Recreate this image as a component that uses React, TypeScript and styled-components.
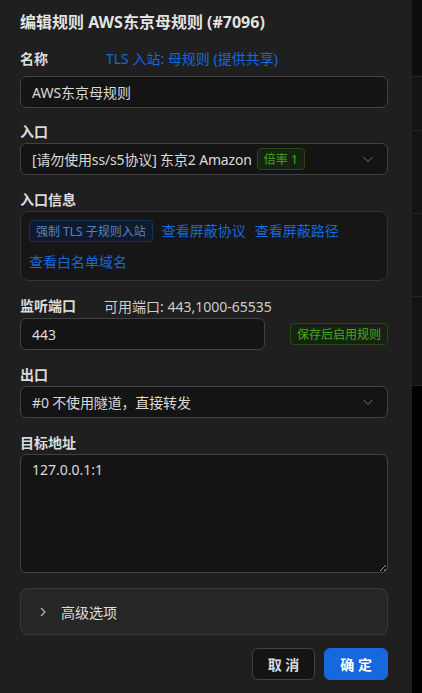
import React from "react";
import styled, { createGlobalStyle } from "styled-components";

const Global = createGlobalStyle`
  html, body { margin: 0; padding: 0; background: #000; }
  body { font-family: "Noto Sans", "Noto Sans CJK SC", sans-serif; }
  * { box-sizing: border-box; }
`;

const Page = styled.div`
  display: flex;
  width: 422px;
  height: 693px;
  overflow: hidden;
`;

const Panel = styled.div`
  width: 412px;
  flex: none;
  background: #1f1f1f;
  padding: 10px 24px 0 20px;
  display: flex;
  flex-direction: column;
  color: rgba(255, 255, 255, 0.85);
  font-size: 14px;
`;

const Title = styled.div`
  font-size: 16px;
  font-weight: 700;
  line-height: 24px;
  color: rgba(255, 255, 255, 0.88);
`;

const Item = styled.div<{ $top?: number }>`
  display: flex;
  flex-direction: column;
  margin-top: ${(p) => p.$top ?? 14}px;
`;

const LabelRow = styled.div<{ $gap?: number; $below?: number }>`
  display: flex;
  align-items: center;
  height: 22px;
  gap: ${(p) => p.$gap ?? 0}px;
  margin-bottom: ${(p) => p.$below ?? 0}px;
`;

const Label = styled.span`
  font-weight: 700;
  font-size: 14px;
  line-height: 22px;
  color: rgba(255, 255, 255, 0.85);
`;

const HintText = styled.span`
  font-size: 14px;
  color: rgba(255, 255, 255, 0.78);
`;

const LinkText = styled.span`
  font-size: 14px;
  color: #1668dc;
  line-height: 22px;
  cursor: pointer;
  white-space: nowrap;
`;

const TextInput = styled.input`
  height: 32px;
  width: 100%;
  background: #141414;
  border: 1px solid #424242;
  border-radius: 6px;
  padding: 4px 11px;
  color: rgba(255, 255, 255, 0.85);
  font-family: inherit;
  font-size: 14px;
  outline: none;
`;

const SelectBox = styled.div`
  height: 32px;
  width: 100%;
  background: #141414;
  border: 1px solid #424242;
  border-radius: 6px;
  padding: 0 11px;
  display: flex;
  align-items: center;
  gap: 6px;
  color: rgba(255, 255, 255, 0.85);
  font-size: 14px;
`;

const SelectValue = styled.span`
  flex: 1;
  display: flex;
  align-items: center;
  gap: 5px;
  white-space: nowrap;
  overflow: hidden;
  letter-spacing: -0.15px;
`;

const Chevron = styled.svg`
  width: 12px;
  height: 12px;
  flex: none;
  color: rgba(255, 255, 255, 0.25);
  margin-right: 2px;
`;

const Tag = styled.span<{ $tone: "green" | "blue" }>`
  display: inline-flex;
  align-items: center;
  height: 22px;
  padding: 0 6px;
  font-size: 12px;
  letter-spacing: 0;
  border-radius: 4px;
  white-space: nowrap;
  border: 1px solid ${(p) => (p.$tone === "green" ? "#274916" : "#15325b")};
  background: ${(p) => (p.$tone === "green" ? "#162312" : "#111a2c")};
  color: ${(p) => (p.$tone === "green" ? "#49aa19" : "#4f86c9")};
`;

const InfoBox = styled.div`
  border: 1px solid #333333;
  background: #161616;
  border-radius: 8px;
  padding: 8px 8px 7px 8px;
  display: flex;
  flex-wrap: wrap;
  align-items: center;
  column-gap: 9px;
  row-gap: 9px;
  height: 70px;
`;

const PortRow = styled.div`
  display: flex;
  align-items: center;
  justify-content: space-between;
  gap: 22px;
`;

const PortInput = styled(TextInput)`
  width: 245px;
  flex: none;
`;

const TextArea = styled.textarea`
  width: 100%;
  height: 119px;
  background: #141414;
  border: 1px solid #424242;
  border-radius: 6px;
  padding: 4px 11px;
  color: rgba(255, 255, 255, 0.85);
  font-family: inherit;
  font-size: 14px;
  line-height: 22px;
  outline: none;
  resize: vertical;
`;

const Collapse = styled.div`
  margin-top: 15px;
  height: 47px;
  border: 1px solid #3a3a3a;
  border-radius: 8px;
  background: #262626;
  display: flex;
  align-items: center;
  padding: 0 16px;
  gap: 12px;
  color: rgba(255, 255, 255, 0.85);
  font-size: 14px;
`;

const Arrow = styled.svg`
  width: 12px;
  height: 12px;
  color: rgba(255, 255, 255, 0.7);
`;

const Footer = styled.div`
  margin-top: 13px;
  display: flex;
  justify-content: flex-end;
  gap: 9px;
`;

const Button = styled.button<{ $primary?: boolean }>`
  height: 32px;
  padding: 0 15px;
  border-radius: 6px;
  font-family: inherit;
  font-size: 14px;
  font-weight: 700;
  white-space: pre;
  border: 1px solid ${(p) => (p.$primary ? "#1668dc" : "#424242")};
  background: ${(p) => (p.$primary ? "#1668dc" : "#141414")};
  color: ${(p) => (p.$primary ? "#fff" : "rgba(255,255,255,0.85)")};
  display: inline-flex;
  align-items: center;
  justify-content: center;
`;

const NameLabel = styled(Label)`
  width: 86px;
`;

const Side = styled.div`
  flex: 1;
  display: flex;
  flex-direction: column;
  background: #000;
`;

const SideBlock = styled.div<{ $h: number; $bg: string }>`
  height: ${(p) => p.$h}px;
  background: ${(p) => p.$bg};
  border-bottom: 1px solid #262626;
  flex: none;
`;

const ChevronDown = () => (
  <Chevron viewBox="0 0 12 12" fill="none">
    <path d="M1.5 4 L6 8.5 L10.5 4" stroke="currentColor" strokeWidth="1.1" />
  </Chevron>
);

export default function App() {
  return (
    <>
      <Global />
      <Page>
        <Panel>
          <Title>编辑规则 AWS东京母规则 (#7096)</Title>

          <Item $top={14}>
            <LabelRow $below={6}>
              <NameLabel>名称</NameLabel>
              <LinkText>TLS 入站: 母规则 (提供共享)</LinkText>
            </LabelRow>
            <TextInput defaultValue="AWS东京母规则" />
          </Item>

          <Item $top={13}>
            <LabelRow>
              <Label>入口</Label>
            </LabelRow>
            <SelectBox>
              <SelectValue>
                [请勿使用ss/s5协议] 东京2 Amazon
                <Tag $tone="green">倍率 1</Tag>
              </SelectValue>
              <ChevronDown />
            </SelectBox>
          </Item>

          <Item>
            <LabelRow>
              <Label>入口信息</Label>
            </LabelRow>
            <InfoBox>
              <Tag $tone="blue">强制 TLS 子规则入站</Tag>
              <LinkText>查看屏蔽协议</LinkText>
              <LinkText>查看屏蔽路径</LinkText>
              <LinkText>查看白名单域名</LinkText>
            </InfoBox>
          </Item>

          <Item>
            <LabelRow $gap={28} $below={1}>
              <Label>监听端口</Label>
              <HintText>可用端口: 443,1000-65535</HintText>
            </LabelRow>
            <PortRow>
              <PortInput defaultValue="443" />
              <Tag $tone="green">保存后启用规则</Tag>
            </PortRow>
          </Item>

          <Item>
            <LabelRow>
              <Label>出口</Label>
            </LabelRow>
            <SelectBox>
              <SelectValue>#0 不使用隧道，直接转发</SelectValue>
              <ChevronDown />
            </SelectBox>
          </Item>

          <Item>
            <LabelRow>
              <Label>目标地址</Label>
            </LabelRow>
            <TextArea defaultValue="127.0.0.1:1" />
          </Item>

          <Collapse>
            <Arrow viewBox="0 0 12 12" fill="none">
              <path d="M4 2 L8 6 L4 10" stroke="currentColor" strokeWidth="1.1" />
            </Arrow>
            高级选项
          </Collapse>

          <Footer>
            <Button>{"取 消"}</Button>
            <Button $primary>{"确 定"}</Button>
          </Footer>
        </Panel>
        <Side>
          <SideBlock $h={77} $bg="#0e0e0e" />
          <SideBlock $h={54} $bg="#141414" />
          <SideBlock $h={83} $bg="#141414" />
          <SideBlock $h={83} $bg="#141414" />
          <SideBlock $h={89} $bg="#141414" />
        </Side>
      </Page>
    </>
  );
}
